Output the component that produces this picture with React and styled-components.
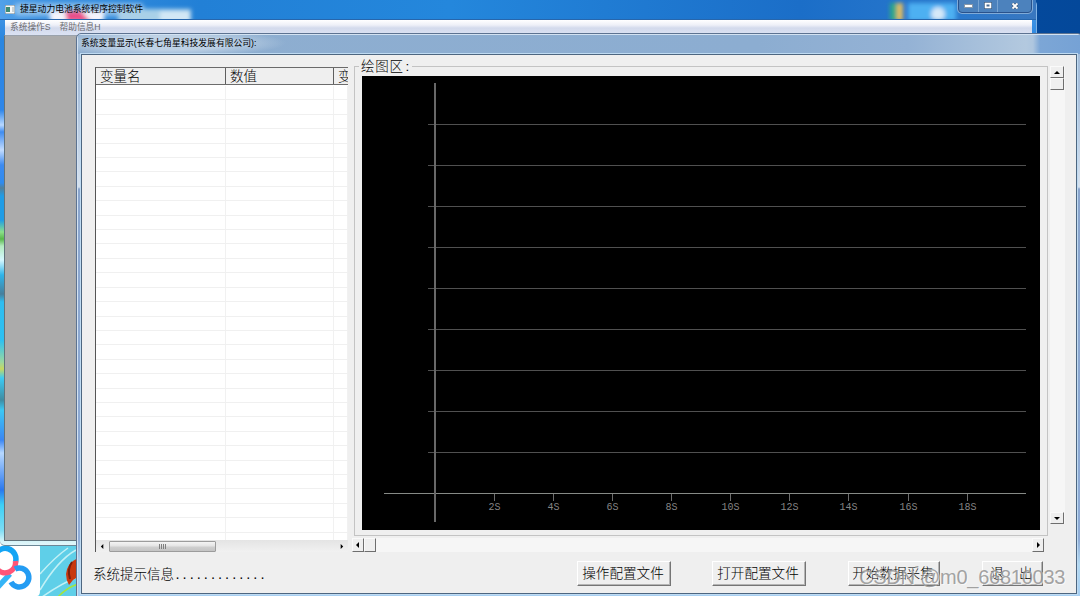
import React from 'react';
import styled, { createGlobalStyle } from 'styled-components';

const GlobalStyle = createGlobalStyle`
  * {
    box-sizing: border-box;
  }
  body {
    margin: 0;
    overflow: hidden;
    font-family: "Liberation Sans", "Noto Sans CJK SC", sans-serif;
    color: #000;
  }
`;

const Desktop = styled.div`
  position: relative;
  width: 1080px;
  height: 596px;
  overflow: hidden;
  background: linear-gradient(90deg, #2583da 0, #1b6ec4 800px, #04499c 1035px, #04489a 100%);
`;

const Wallpaper = styled.svg`
  position: absolute;
  left: 0;
  bottom: 0;
`;

/* main window */
const MainWindow = styled.div`
  position: absolute;
  left: 0;
  top: 0;
  width: 1037px;
  height: 546px;
  display: flex;
  flex-direction: column;
  padding: 0 4px 4px 4px;
  border-right: 1px solid #7fb2e4;
  border-bottom: 1px solid #6b8796;
  border-radius: 0 5px 5px 5px;
  background: linear-gradient(180deg, #4f9de6 0, #2a86e0 40px, #2e86ea 110px, #b9d8ff 125px, #3f8cf0 132px, #c3dcff 150px, #3c8af0 165px, #2f8bee 183px, #51809c 188px, #1f9ce6 196px, #1f9ce6 220px, #8be08a 232px, #58b84a 239px, #b4ecc0 246px, #d6f8ff 260px, #2eb4ea 275px, #477f9c 294px, #2fbdf0 302px, #2cc0f2 340px, #9ad8a0 362px, #c8d860 369px, #3ccaf4 378px, #3f8ca2 400px, #3cc8f4 410px, #3a86f4 440px, #b7d8ff 453px, #2a78ee 490px, #3cd0f6 505px, #7cdcf4 530px, #d4f4f8 541px, #e2f6fa 545px);
`;
const TitleBar = styled.div`
  position: relative;
  flex: none;
  display: flex;
  align-items: center;
  height: 20px;
  margin: 0 -4px;
  padding: 0 0 1px 5px;
  border-bottom: 1px solid #2766ac;
  background: linear-gradient(90deg, #52a1ea 0, #3a90e0 40px, #2280d6 200px, #2487dc 450px, #1b6ec8 800px, #2a78cc 960px, #3977bf 1036px);
`;
const TitleGlow = styled.svg`
  position: absolute;
  left: 0;
  top: 0;
`;
const AppIcon = styled.svg`
  position: relative;
  margin-right: 5px;
`;
const TitleText = styled.span`
  position: relative;
  font-size: 8.8px;
  line-height: 14px;
  white-space: nowrap;
`;
const WindowButtons = styled.div`
  position: absolute;
  right: 4px;
  top: -2px;
  display: flex;
  height: 15px;
  border: 1px solid #29528c;
  border-radius: 0 0 4px 4px;
  background: #4c82bd;
  box-shadow: 0 0 0 1px #80abd8;
`;
const WindowButton = styled.div`
  display: flex;
  align-items: center;
  justify-content: center;
  width: ${({ $width }) => $width}px;
  border-right: 1px solid #78a4d2;

  &:last-child {
    border-right: 0;
  }
`;
const MenuBar = styled.div`
  flex: none;
  display: flex;
  gap: 9px;
  height: 15px;
  margin-left: 1px;
  padding-left: 5px;
  font-size: 8.7px;
  line-height: 15px;
  color: #6b6b70;
  background: linear-gradient(180deg, #fff 0, #eef0f8 5px, #d3daec 8px, #dbe2f3 100%);
`;
const Workspace = styled.div`
  flex: 1;
  border: 1px solid #62737c;
  border-top-color: #9aa2ac;
  background: #ababab;
`;

/* dialog */
const Dialog = styled.div`
  position: absolute;
  left: 76px;
  top: 33px;
  width: 1006px;
  height: 570px;
  display: flex;
  flex-direction: column;
  padding: 0 4px 0 4px;
  border: 1px solid #5d7391;
  border-radius: 5px 4px 0 0;
  background: linear-gradient(180deg, #a2bcd8 0, #a9c0dc 60px, #d5e1ee 153px, #8aa5cd 155px, #8eabd6 505px, #b1d8f2 530px, #a5cdf2 100%);
  box-shadow: inset 1px 1px 0 #d3e2f2;
`;
const DialogTitle = styled.div`
  flex: none;
  display: flex;
  align-items: center;
  height: 19px;
  margin: 1px -3px 0;
  padding: 0 0 3px 3px;
  background:
    radial-gradient(ellipse 120px 14px at 88px 8px, rgba(195, 213, 231, 0.9) 50%, transparent),
    linear-gradient(90deg, #8eaed0 0, #8cadd1 680px, #94b2d5 830px, #b3c9df 948px, #aec6df 955px, #7ca6d6 962px, #76a2d5 100%);
`;
const DialogBody = styled.div`
  flex: none;
  display: flex;
  flex-direction: column;
  width: 996px;
  height: 540px;
  padding: 11px 12px 0 13px;
  border: 1px solid #4d6680;
  background: #efefef;
  box-shadow: 0 0 0 1px #bfdbf2;
`;
const Panels = styled.div`
  display: flex;
  align-items: flex-start;
  height: 488px;
`;

/* variable table */
const VariableTable = styled.div`
  flex: none;
  display: flex;
  flex-direction: column;
  width: 253px;
  height: 485px;
  margin-top: 1px;
  border-left: 1px solid #555;
  border-top: 1px solid #6a6a6a;
  background: #fff;
  overflow: hidden;
`;
const TableHead = styled.div`
  flex: none;
  display: flex;
  height: 17px;
  border-bottom: 1px solid #6c6c6c;
  background: #efefef;
`;
const HeadCell = styled.div`
  flex: none;
  width: ${({ $width }) => $width}px;
  padding-left: 4px;
  border-right: 1px solid #5e5e5e;
  font-size: 13.5px;
  line-height: 17px;
  font-weight: 300;
  white-space: nowrap;
  overflow: hidden;

  &:last-child {
    border-right: 0;
  }
`;
const TableBody = styled.div`
  flex: 1;
  padding-top: 1px;
  overflow: hidden;
`;
const TableRow = styled.div`
  display: flex;
  height: 14.42px;
  border-bottom: 1px solid #f0f0f0;
`;
const TableCell = styled.div`
  flex: none;
  width: ${({ $width }) => $width}px;
  border-right: 1px solid #f1f1f1;
`;
const TableScroll = styled.div`
  flex: none;
  display: flex;
  align-items: center;
  height: 12px;
  background: linear-gradient(180deg, #e4e4e4, #f1f1f1);
`;
const TableArrow = styled.div`
  display: flex;
  align-items: center;
  justify-content: center;
  width: 13px;
`;
const TableThumb = styled.div`
  display: flex;
  align-items: center;
  justify-content: center;
  width: 107px;
  height: 11px;
  margin-right: auto;
  border: 1px solid #9c9c9c;
  border-radius: 1px;
  background: linear-gradient(180deg, #f4f4f4 0, #e4e4e4 45%, #cfcfcf 55%, #c4c4c4 100%);
`;

/* plot area */
const PlotColumn = styled.div`
  flex: none;
  width: 696px;
  margin-left: 4px;
`;
const PlotGroup = styled.fieldset`
  width: 694px;
  height: 478px;
  min-width: 0;
  margin: -8px 0 0 2px;
  padding: 0 7px;
  border: 1px solid #c3c3c3;
`;
const PlotLegend = styled.legend`
  height: 17px;
  margin-left: -3px;
  padding: 0 2px;
  font-size: 13.5px;
  line-height: 17px;
  letter-spacing: 0.7px;
  font-weight: 300;
`;
const Colon = styled.span`
  margin-left: 2px;
`;
const PlotCanvas = styled.svg`
  display: block;
  margin-top: 1px;
  background: #000;
`;

/* classic scroll bars */
const ScrollTrack = styled.div`
  flex: none;
  display: flex;
  flex-direction: ${({ $vertical }) => ($vertical ? 'column' : 'row')};
  width: ${({ $vertical }) => ($vertical ? 15 : 692)}px;
  height: ${({ $vertical }) => ($vertical ? 458 : 14)}px;
  margin: ${({ $vertical }) => ($vertical ? '0 0 0 2px' : '2px 0 0')};
  background: #f6f6f6;
`;
const ScrollPart = styled.div`
  flex: none;
  display: flex;
  align-items: center;
  justify-content: center;
  width: ${({ $vertical }) => ($vertical ? 14 : 12)}px;
  height: ${({ $vertical }) => ($vertical ? 12 : 14)}px;
  margin: ${({ $end, $vertical }) => ($end ? ($vertical ? 'auto 0 0' : '0 0 0 auto') : 0)};
  border: 1px solid;
  border-color: #fafafa #6e6e6e #6e6e6e #fafafa;
  background: #efefef;
`;

/* footer */
const Footer = styled.div`
  display: flex;
  align-items: flex-start;
  padding-top: 7px;
`;
const Hint = styled.div`
  width: 484px;
  margin: 4px 0 0 -2px;
  font-size: 13.5px;
  line-height: 20px;
  font-weight: 300;
  white-space: nowrap;
`;
const Dots = styled.span`
  font-family: "Liberation Mono", monospace;
  font-size: 11.8px;
`;
const ActionButton = styled.button`
  flex: none;
  width: ${({ $width }) => $width}px;
  height: 25px;
  margin: 0 ${({ $gap }) => $gap}px 0 0;
  padding: 0 2px 0 0;
  border: 1px solid;
  border-color: #fff #757575 #757575 #fff;
  background: #efefef;
  box-shadow: inset -1px -1px 0 #b5b5b5;
  font-family: inherit;
  font-size: 13.6px;
  line-height: 20px;
  font-weight: 300;
  white-space: pre;
  color: #000;
`;

const Watermark = styled.div`
  position: absolute;
  left: 859px;
  top: 566px;
  font-size: 20px;
  line-height: 23px;
  letter-spacing: -0.25px;
  white-space: nowrap;
  color: rgba(140, 140, 140, 0.8);
  text-shadow: 1px 1px 0 rgba(255, 255, 255, 0.6);
`;

const ARROWS = {
  up: 'M0 5 L3 2 L6 5 Z',
  down: 'M0 2 L6 2 L3 5 Z',
  left: 'M4 0 L1 3 L4 6 Z',
  right: 'M2 0 L5 3 L2 6 Z',
};

const Arrow = ({ dir, size = 6 }) => (
  <svg width={size} height={size} viewBox="0 0 6 6">
    <path d={ARROWS[dir]} fill="#000" />
  </svg>
);

const ScrollBar = ({ vertical }) => (
  <ScrollTrack $vertical={vertical}>
    <ScrollPart $vertical={vertical}><Arrow dir={vertical ? 'up' : 'left'} /></ScrollPart>
    <ScrollPart $vertical={vertical} />
    <ScrollPart $vertical={vertical} $end><Arrow dir={vertical ? 'down' : 'right'} /></ScrollPart>
  </ScrollTrack>
);

const columns = [
  { name: '变量名', width: 130 },
  { name: '数值', width: 108 },
  { name: '变', width: 14 },
];
const rows = Array.from({ length: 32 }, (_, i) => i);
const gridLines = [48, 89, 130, 171, 212, 253, 294, 335, 376];
const ticks = [132, 191, 250, 309, 368, 427, 486, 546, 605];
const actions = [
  { label: '操作配置文件', width: 94, gap: 41 },
  { label: '打开配置文件', width: 94, gap: 42 },
  { label: '开始数据采集', width: 92, gap: 42 },
  { label: '退    出', width: 61, gap: 0 },
];

const Plot = () => (
  <PlotCanvas width="678" height="454" shapeRendering="crispEdges">
    {gridLines.map(y => <rect key={y} x="66" y={y} width="598" height="1" fill="#505050" />)}
    <rect x="22" y="417" width="642" height="1" fill="#868a86" />
    <rect x="72" y="7" width="2" height="439" fill="#686868" />
    {ticks.map((x, i) => (
      <g key={x}>
        <rect x={x} y="418" width="1" height="7" fill="#6c6c6c" />
        <text x={x + 0.5} y="434" textAnchor="middle" fill="#858585" fontFamily="Liberation Mono, monospace" fontSize="10">
          {(i + 1) * 2}S
        </text>
      </g>
    ))}
  </PlotCanvas>
);

const DesktopPicture = () => (
  <Wallpaper width="90" height="60" viewBox="0 536 90 60">
    <rect x="0" y="536" width="90" height="60" fill="#5fcfe8" />
    <path d="M40 590 Q58 560 76 550 M40 574 Q55 557 68 548 M42 597 Q62 583 78 577" stroke="#c2f1f6" strokeWidth="1.5" fill="none" />
    <path d="M58 597 Q66 588 78 584" stroke="#a5e63a" strokeWidth="1.5" fill="none" />
    <path d="M78 558 Q67 563 66 574 Q66 580 69 585 L73 580 L78 577 Z" fill="#c8390f" />
    <path d="M72 562 Q67 569 70 579" stroke="#7b1f0c" strokeWidth="2" fill="none" />
    <path d="M0 536 H37 Q40 540 40 548 V590 Q40 596 37 596 H0 Z" fill="#fff" />
    <g fill="none" strokeWidth="5.5">
      <path d="M10 574 L-3 588" stroke="#35b4f6" />
      <path d="M-5 556 A10.5 10.5 0 0 1 15.5 562" stroke="#14a5f4" />
      <path d="M15.5 561 A10.5 10.5 0 0 1 -3 569" stroke="#ff5578" />
      <path d="M15 569 A9.5 9.5 0 1 1 11 582" stroke="#249cf3" />
    </g>
  </Wallpaper>
);

const App = () => (
  <>
    <GlobalStyle />
    <Desktop>
      <DesktopPicture />
      <MainWindow>
        <TitleBar>
          <TitleGlow width="1036" height="19">
            <defs>
              <filter id="soft" x="-20%" y="-50%" width="140%" height="200%">
                <feGaussianBlur stdDeviation="2" />
              </filter>
            </defs>
            <g filter="url(#soft)">
              <rect x="14" y="3" width="130" height="13" rx="5" fill="#9fc9ee" opacity="0.8" />
              <rect x="50" y="11" width="54" height="12" fill="#f4f4fb" />
              <path d="M65 11 H81 L91 22 H67 Z" fill="#e9508a" />
              <rect x="118" y="9" width="73" height="14" fill="#a9d0e8" />
              <rect x="160" y="11" width="30" height="12" fill="#d3e7f5" />
              <rect x="890" y="3" width="8" height="18" fill="#2da888" />
              <rect x="897" y="3" width="6" height="18" fill="#e4bd60" />
              <rect x="908" y="3" width="48" height="18" fill="#4db0f2" />
              <circle cx="938" cy="14" r="7" fill="#d5e8f8" />
            </g>
          </TitleGlow>
          <AppIcon width="10" height="9">
            <rect width="10" height="9" fill="#f6f8f8" stroke="#6d7f8c" />
            <rect x="1" y="2" width="4" height="5" fill="#3c8b74" />
            <rect x="7" y="2" width="2" height="5" fill="#ccd2d2" />
          </AppIcon>
          <TitleText>捷星动力电池系统程序控制软件</TitleText>
          <WindowButtons>
            <WindowButton $width={20}>
              <svg width="9" height="5"><rect x="0.5" y="1.5" width="8" height="3" fill="#fff" stroke="#8797a8" /></svg>
            </WindowButton>
            <WindowButton $width={19}>
              <svg width="8" height="7"><rect x="1.5" y="1.5" width="5" height="4" fill="#496b91" stroke="#fff" strokeWidth="2" /><rect x="0.25" y="0.25" width="7.5" height="6.5" fill="none" stroke="#43566c" strokeWidth="0.5" /></svg>
            </WindowButton>
            <WindowButton $width={33}>
              <svg width="8" height="8"><path d="M1.5 1.5 L6.5 6.5 M6.5 1.5 L1.5 6.5" stroke="#43566c" strokeWidth="3" /><path d="M1.5 1.5 L6.5 6.5 M6.5 1.5 L1.5 6.5" stroke="#fff" strokeWidth="1.8" /></svg>
            </WindowButton>
          </WindowButtons>
        </TitleBar>
        <MenuBar>
          <span>系统操作S</span>
          <span>帮助信息H</span>
        </MenuBar>
        <Workspace />
      </MainWindow>

      <Dialog>
        <DialogTitle>
          <TitleText>系统变量显示(长春七角星科技发展有限公司):</TitleText>
        </DialogTitle>
        <DialogBody>
          <Panels>
            <VariableTable>
              <TableHead>
                {columns.map(c => <HeadCell key={c.name} $width={c.width}>{c.name}</HeadCell>)}
              </TableHead>
              <TableBody>
                {rows.map(r => (
                  <TableRow key={r}>
                    {columns.map(c => <TableCell key={c.name} $width={c.width} />)}
                  </TableRow>
                ))}
              </TableBody>
              <TableScroll>
                <TableArrow><Arrow dir="left" size={5} /></TableArrow>
                <TableThumb>
                  <svg width="7" height="5"><path d="M0.5 0 V5 M2.5 0 V5 M4.5 0 V5 M6.5 0 V5" stroke="#808080" /></svg>
                </TableThumb>
                <TableArrow><Arrow dir="right" size={5} /></TableArrow>
              </TableScroll>
            </VariableTable>
            <PlotColumn>
              <PlotGroup>
                <PlotLegend>绘图区<Colon>:</Colon></PlotLegend>
                <Plot />
              </PlotGroup>
              <ScrollBar />
            </PlotColumn>
            <ScrollBar vertical />
          </Panels>
          <Footer>
            <Hint>系统提示信息<Dots>.............</Dots></Hint>
            {actions.map(a => (
              <ActionButton key={a.label} $width={a.width} $gap={a.gap}>{a.label}</ActionButton>
            ))}
          </Footer>
        </DialogBody>
      </Dialog>
      <Watermark>CSDN @m0_66810033</Watermark>
    </Desktop>
  </>
);

export default App;
